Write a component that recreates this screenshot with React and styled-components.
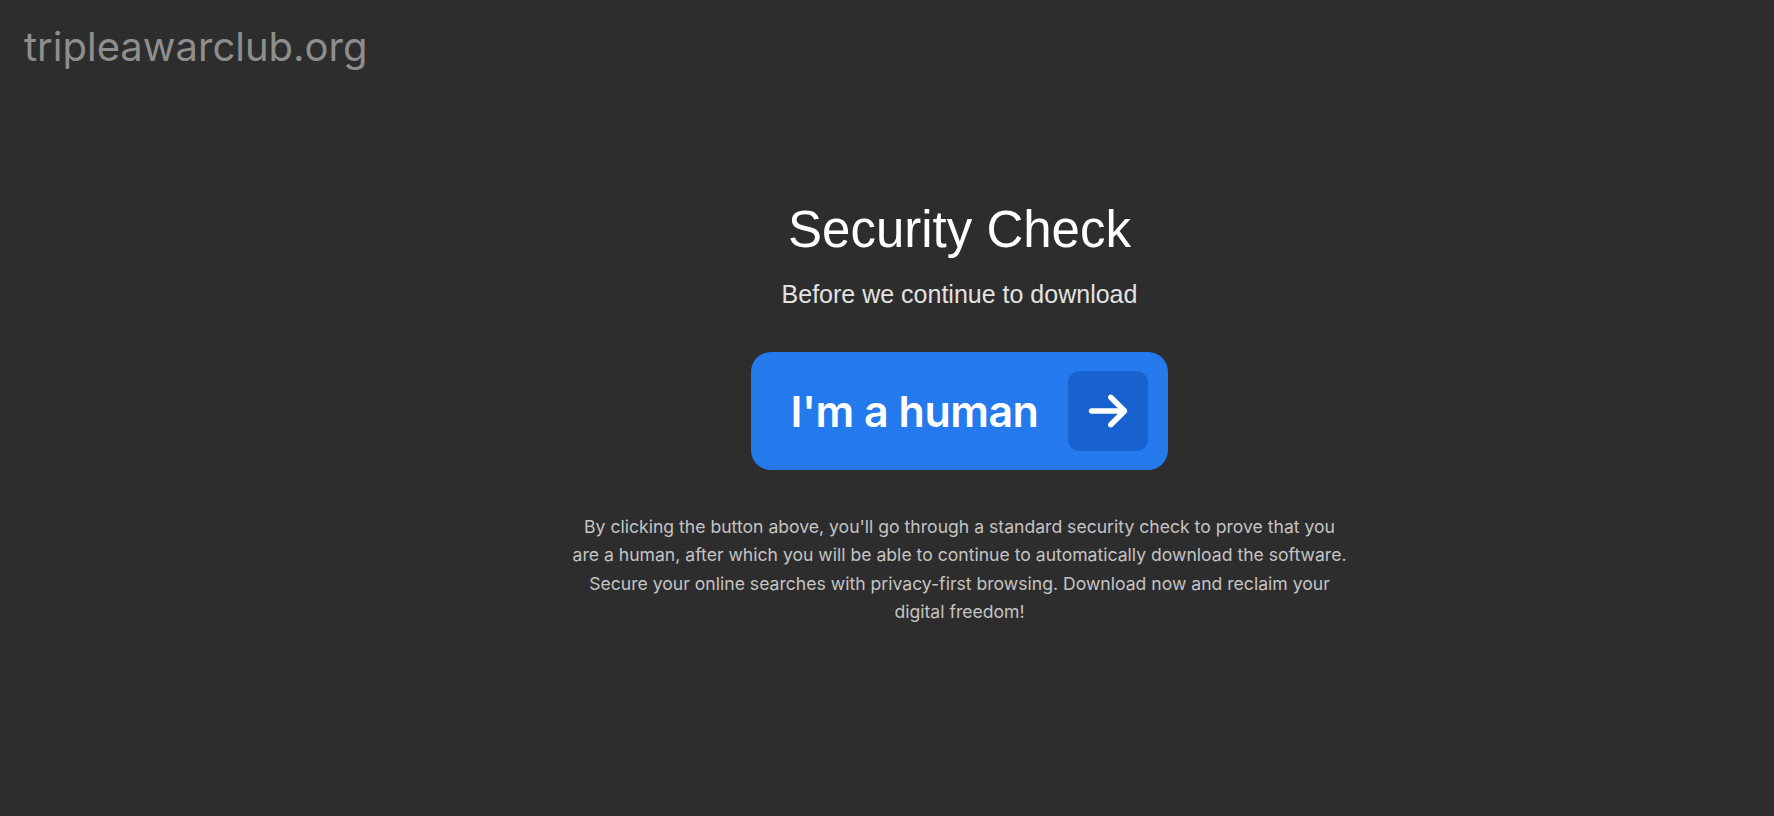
import React from "react";
import styled, { createGlobalStyle } from "styled-components";
import { FaArrowRight } from "react-icons/fa6";

const Global = createGlobalStyle`
  html, body { margin: 0; padding: 0; background: #2d2d2d; }
  body { font-family: Inter, "Noto Sans", sans-serif; }
`;

const Page = styled.div`
  min-height: 816px;
  background: #2d2d2d;
  display: flex;
  flex-direction: column;
`;

const Header = styled.header`
  padding: 27px 0 0 24px;
  height: 55px;
`;

const Logo = styled.div`
  font-family: Inter, sans-serif;
  font-size: 40px;
  line-height: 1;
  color: #8e8e8e;
`;

const Main = styled.main`
  display: flex;
  flex-direction: column;
  align-items: center;
  padding: 120px 0 0 145px;
`;

const Title = styled.h1`
  margin: 0;
  font-family: "Liberation Sans", Arial, sans-serif;
  font-weight: 400;
  font-size: 51px;
  line-height: 56px;
  color: #ffffff;
`;

const Subtitle = styled.p`
  margin: 21px 0 0;
  font-family: "Liberation Sans", Arial, sans-serif;
  font-size: 25px;
  line-height: 30px;
  color: #e2e2e2;
`;

const HumanButton = styled.button`
  margin-top: 43px;
  display: flex;
  align-items: center;
  gap: 30px;
  padding: 19px 20px 19px 40px;
  border: none;
  border-radius: 20px;
  background: #2479ec;
  cursor: pointer;
`;

const ButtonLabel = styled.span`
  font-family: Inter, sans-serif;
  font-weight: 600;
  font-size: 43px;
  color: #ffffff;
  letter-spacing: -0.5px;
`;

const ArrowBox = styled.span`
  width: 80px;
  height: 80px;
  border-radius: 12px;
  background: #1862cf;
  display: flex;
  align-items: center;
  justify-content: center;
  color: #ffffff;
`;

const Note = styled.p`
  margin: 43px 0 0;
  max-width: 775px;
  font-family: Inter, sans-serif;
  font-size: 17.6px;
  line-height: 28.3px;
  color: #c4c4c4;
  text-align: center;
`;

export default function App() {
  return (
    <Page>
      <Global />
      <Header>
        <Logo>tripleawarclub.org</Logo>
      </Header>
      <Main>
        <Title>Security Check</Title>
        <Subtitle>Before we continue to download</Subtitle>
        <HumanButton>
          <ButtonLabel>I'm a human</ButtonLabel>
          <ArrowBox>
            <FaArrowRight size={44} />
          </ArrowBox>
        </HumanButton>
        <Note>
          By clicking the button above, you'll go through a standard security check to prove that you
          are a human, after which you will be able to continue to automatically download the software.
          Secure your online searches with privacy-first browsing. Download now and reclaim your
          digital freedom!
        </Note>
      </Main>
    </Page>
  );
}
